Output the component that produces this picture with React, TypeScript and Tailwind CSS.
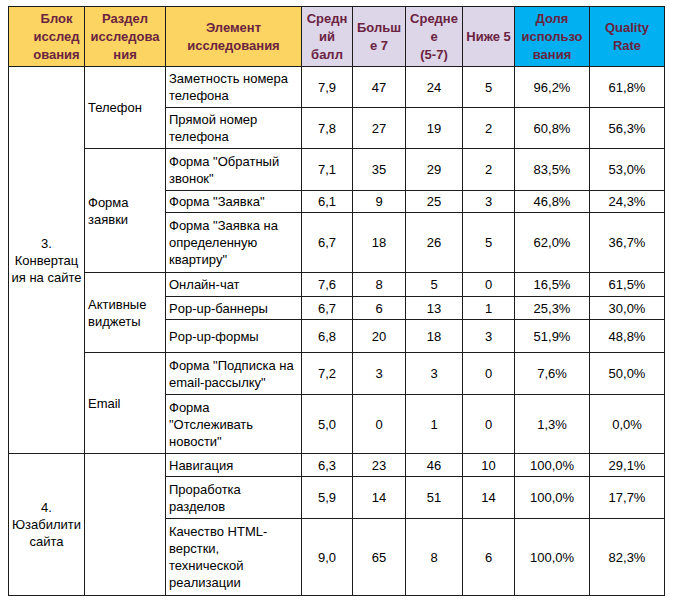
import React from "react";

type Row = {
  h: number;
  block?: { text: string[]; span: number };
  section?: { text: string[]; span: number };
  item: string[];
  avg: string;
  hi: string;
  mid: string;
  lo: string;
  share: string;
  qr: string;
};

const rows: Row[] = [
  {
    h: 41,
    block: { text: ["3.", "Конвертац", "ия на сайте"], span: 10 },
    section: { text: ["Телефон"], span: 2 },
    item: ["Заметность номера", "телефона"],
    avg: "7,9", hi: "47", mid: "24", lo: "5", share: "96,2%", qr: "61,8%",
  },
  { h: 41, item: ["Прямой номер", "телефона"], avg: "7,8", hi: "27", mid: "19", lo: "2", share: "60,8%", qr: "56,3%" },
  {
    h: 42,
    section: { text: ["Форма", "заявки"], span: 3 },
    item: ["Форма \"Обратный", "звонок\""],
    avg: "7,1", hi: "35", mid: "29", lo: "2", share: "83,5%", qr: "53,0%",
  },
  { h: 22, item: ["Форма \"Заявка\""], avg: "6,1", hi: "9", mid: "25", lo: "3", share: "46,8%", qr: "24,3%" },
  { h: 60, item: ["Форма \"Заявка на", "определенную", "квартиру\""], avg: "6,7", hi: "18", mid: "26", lo: "5", share: "62,0%", qr: "36,7%" },
  {
    h: 24,
    section: { text: ["Активные", "виджеты"], span: 3 },
    item: ["Онлайн-чат"],
    avg: "7,6", hi: "8", mid: "5", lo: "0", share: "16,5%", qr: "61,5%",
  },
  { h: 23, item: ["Pop-up-баннеры"], avg: "6,7", hi: "6", mid: "13", lo: "1", share: "25,3%", qr: "30,0%" },
  { h: 33, item: ["Pop-up-формы"], avg: "6,8", hi: "20", mid: "18", lo: "3", share: "51,9%", qr: "48,8%" },
  {
    h: 42,
    section: { text: ["Email"], span: 2 },
    item: ["Форма \"Подписка на", "email-рассылку\""],
    avg: "7,2", hi: "3", mid: "3", lo: "0", share: "7,6%", qr: "50,0%",
  },
  { h: 59, item: ["Форма", "\"Отслеживать", "новости\""], avg: "5,0", hi: "0", mid: "1", lo: "0", share: "1,3%", qr: "0,0%" },
  {
    h: 23,
    block: { text: ["4.", "Юзабилити", "сайта"], span: 3 },
    section: { text: [], span: 3 },
    item: ["Навигация"],
    avg: "6,3", hi: "23", mid: "46", lo: "10", share: "100,0%", qr: "29,1%",
  },
  { h: 42, item: ["Проработка", "разделов"], avg: "5,9", hi: "14", mid: "51", lo: "14", share: "100,0%", qr: "17,7%" },
  { h: 77, item: ["Качество HTML-", "верстки,", "технической", "реализации"], avg: "9,0", hi: "65", mid: "8", lo: "6", share: "100,0%", qr: "82,3%" },
];

const lines = (t: string[]) =>
  t.map((s, i) => (
    <React.Fragment key={i}>
      {i > 0 && <br />}
      {s}
    </React.Fragment>
  ));

const cell = "border border-[#1c1c1c] align-middle p-0";
const num = `${cell} text-center`;

export default function App() {
  return (
    <div className="w-[675px] h-[610px] bg-white pt-[6px] pl-[8px] font-['Liberation_Sans',Arial,sans-serif] text-[13px] leading-[17px] text-black">
      <table className="border-collapse table-fixed w-[656px]">
        <colgroup>
          <col className="w-[76px]" />
          <col className="w-[81px]" />
          <col className="w-[136px]" />
          <col className="w-[51px]" />
          <col className="w-[53px]" />
          <col className="w-[57px]" />
          <col className="w-[52px]" />
          <col className="w-[75px]" />
          <col className="w-[75px]" />
        </colgroup>
        <thead>
          <tr className="h-[60px] font-bold leading-[18px] text-[#6a2340]">
            <th className={`${cell} bg-[#fcd462] text-center pl-5`}>{lines(["Блок", "исслед", "ования"])}</th>
            <th className={`${cell} bg-[#fcd462] text-center`}>{lines(["Раздел", "исследова", "ния"])}</th>
            <th className={`${cell} bg-[#fcd462] text-center`}>{lines(["Элемент", "исследования"])}</th>
            <th className={`${cell} bg-[#ddd5e8] text-center`}>{lines(["Средн", "ий", "балл"])}</th>
            <th className={`${cell} bg-[#ddd5e8] text-center`}>{lines(["Больш", "е 7"])}</th>
            <th className={`${cell} bg-[#ddd5e8] text-center`}>{lines(["Средне", "е", "(5-7)"])}</th>
            <th className={`${cell} bg-[#ddd5e8] text-center`}>Ниже 5</th>
            <th className={`${cell} bg-[#00b0f0] text-center`}>{lines(["Доля", "использо", "вания"])}</th>
            <th className={`${cell} bg-[#00b0f0] text-center`}>{lines(["Quality", "Rate"])}</th>
          </tr>
        </thead>
        <tbody>
          {rows.map((r, i) => (
            <tr key={i} style={{ height: r.h }}>
              {r.block && (
                <td rowSpan={r.block.span} className={`${cell} text-center`}>
                  {lines(r.block.text)}
                </td>
              )}
              {r.section && (
                <td rowSpan={r.section.span} className={`${cell} pl-[3px]`}>
                  {lines(r.section.text)}
                </td>
              )}
              <td className={`${cell} pl-[3px] whitespace-nowrap`}>{lines(r.item)}</td>
              <td className={num}>{r.avg}</td>
              <td className={`${num} border-l-[#555]`}>{r.hi}</td>
              <td className={`${num} border-l-[#555]`}>{r.mid}</td>
              <td className={num}>{r.lo}</td>
              <td className={num}>{r.share}</td>
              <td className={num}>{r.qr}</td>
            </tr>
          ))}
        </tbody>
      </table>
    </div>
  );
}
